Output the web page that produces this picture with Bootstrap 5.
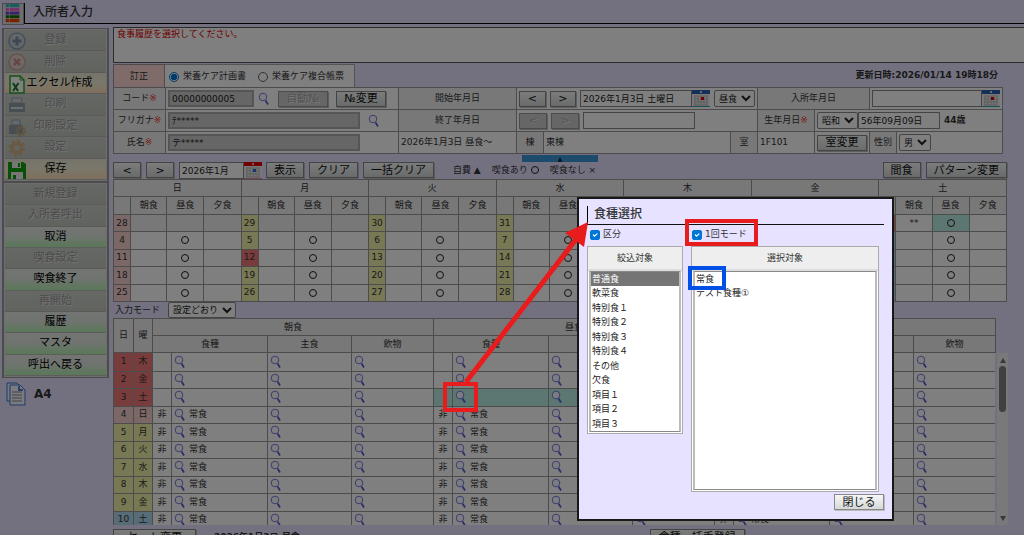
<!DOCTYPE html>
<html lang="ja">
<head>
<meta charset="utf-8">
<meta name="viewport" content="width=device-width, initial-scale=1">
<title>入所者入力</title>
<link href="https://cdn.jsdelivr.net/npm/bootstrap@5.3.0/dist/css/bootstrap.min.css" rel="stylesheet">
<style>
  body { font: 9px/13px "DejaVu Sans", "Noto Sans CJK JP", sans-serif; color: #333; background: #e6e2ff; height: 100vh; overflow: hidden; }
  button, input, select { font-family: inherit; }
  header { padding: 3px 0 0 2px; margin-bottom: 2px; }
  main { min-width: 0; }
  .app-icon { width: 22px; height: 22px; border: 1px solid #999; background: #ddd; }
  .page-title { font-size: 12px; line-height: 18px; height: 21px; border-left: 1px solid #000; border-bottom: 1px solid #000; }
  .side { width: 107px; margin: 1px 4px 0 2px; }
  .side-group { border: 1px solid #999; border-width: 1px 2px; padding: 1px; background: #ddd; }
  .side-a { min-height: 154px; }
  .side-b { min-height: 196px; }
  .side-btn { flex: 1 1 0; font-size: 11px; line-height: 14px; padding: 0; border: 0; border-radius: 0; color: #000; position: relative; border-bottom: 1px solid #bbb; }
  .side-btn:hover { color: #000; }
  .side-btn svg { position: absolute; left: 2px; top: 1px; width: 20px; height: 20px; }
  .side-yellow { background: linear-gradient(#ece8d4, #f4f0d8 45%, #ffdfb8); }
  .side-green { background: linear-gradient(#e6eae6, #dfe8df 50%, #b4f0b0); }
  .side-btn:disabled { background: linear-gradient(#ccd0ca, #c2c6be); color: #999; opacity: 1; text-shadow: 1px 1px 0 #e8e8e8; border-bottom-color: #b4b4b4; }
  .side-btn:disabled svg { opacity: .4; }
  .paper-size { font-size: 12px; }
  .msg { height: 36px; border: 1px solid #555; border-right: 0; background: #fff; color: #e00000; padding: 0 3px; }
  .tab-row { height: 23px; }
  .tab-fix { width: 52px; background: #ffd9d5; border: 1px solid #999; border-bottom: 0; }
  .tab-radio { width: 190px; background: #fff; border: 1px solid #aaa; border-left: 0; border-bottom: 0; }
  .tab-radio .form-check-input { width: 10px; height: 10px; margin: 2px 0 0; }
  input[type=radio]:checked { background-color: #fff; background-image: radial-gradient(circle, #0078d7 0 3px, #fff 3px 4px); border-color: #0078d7; }
  .form-check-input { border-color: #666; }
  .grid { width: 100%; table-layout: fixed; border-collapse: collapse; background: #fff; }
  .grid th, .grid td { border: 1px solid #999; padding: 0; font-weight: 400; vertical-align: middle; overflow: hidden; white-space: nowrap; }
  .grid th { background: #f0f0f0; text-align: center; }
  .person td { padding: 0 2px; }
  .person tr { height: 22px; }
  .req { color: #f03030; }
  .box { font-size: 9px; line-height: 13px; min-height: 0; height: 17px; padding: 0 2px; border: 1px solid #888; border-radius: 0; color: #222; background: #fff; }
  .box:disabled { background: #ccc; color: #222; border: 2px solid #aaa; }
  .w-code { width: 86px; } .w-name { width: 192px; } .w-date { width: 112px; } .w-birth { width: 82px; } .w-month { width: 65px; }
  .pick { font-size: 9px; line-height: 13px; height: 17px; border: 1px solid #888; border-radius: 2px; background: #fff; color: #222; padding: 0; }
  .cmd { font-size: 11px; line-height: 13px; height: 16px; padding: 0 7px; border: 1px solid #888; border-radius: 0; color: #111; background: linear-gradient(#f6f8f8, #d4d8d8); box-shadow: 1px 1px 0 #bbb; white-space: nowrap; }
  .cmd:disabled { background: #ccc; color: #aaa; border-color: #999; opacity: 1; text-shadow: 1px 1px 0 #eee; }
  .cmd-step { width: 28px; padding: 0; }
  .cmd-w { width: 50px; padding: 0; }
  .cal-ico { width: 18px; height: 17px; flex: none; }
  .mag { width: 12px; height: 14px; display: block; }
  .person-wrap { margin-right: 22px; padding-top: 1px; }
  .calendar-wrap { margin-right: 17px; }
  .meal-wrap { margin-right: 29px; }
  .bar { height: 25px; padding-top: 7px; margin-right: 17px; position: relative; }
  .bar .cmd { margin-right: 5px; }
  .legend { gap: 11px; margin-left: 14px; }
  .pull-tab { position: absolute; left: 409px; top: 1px; width: 76px; height: 7px; background: #3a96d8; font-size: 6px; line-height: 8px; color: #123; text-align: center; }
  .month-table { height: 123px; text-align: center; }
  .month-table .gone { background: #f0f0f0; }
  .c-sun { background: #f6d0cc !important; } .c-day { background: #f0f0a8 !important; } .c-sat { background: #b0d8f0 !important; }
  .c-red { background: #f07878 !important; } .c-now { background: #b8ece2 !important; }
  .ring { width: 8px; height: 8px; border: 1px solid #222; border-radius: 50%; display: inline-block; vertical-align: middle; }
  .mode-row { height: 16px; padding-left: 2px; }
  .mode-row .pick { height: 16px; }
  .meal-head { height: 35px; }
  .meal-scroll { height: 172px; overflow: hidden; }
  .meal-table tbody tr:nth-child(odd) { height: 18px; }
  .meal-table tbody tr:nth-child(even) { height: 17px; }
  .meal-table tbody tr:first-child td { border-top: 0; }
  .meal-table td { text-align: center; }
  .meal-table td.pickcell { text-align: left; padding-left: 2px; }
  .pickcell > div { gap: 3px; }
  .scroll-rail { position: absolute; right: 16px; top: 35px; bottom: 0; width: 11px; background: #f2f2f2; }
  .scroll-rail i { width: 7px; height: 46px; border-radius: 4px; background: #808080; margin: 3px auto auto; display: block; }
  .tri-up, .tri-down { width: 0; border: 3px solid transparent; }
  .tri-up { border-top: 0; border-bottom: 5px solid #707070; margin-top: 5px; }
  .tri-down { border-bottom: 0; border-top: 5px solid #707070; margin-bottom: 4px; }
  .foot { padding-top: 4px; }
  .foot .cmd { padding: 0 13px; }
  .foot .cmd:first-child { margin-right: 18px; }
  .foot .cmd:last-child { margin-left: 350px; padding: 0 8px; }
  .shade { background: rgba(0, 0, 0, .5); }
  .dialog { position: absolute; left: 577px; top: 197px; width: 317px; border: 2px solid #181818; background: #e6e2ff; padding: 7px 8px 9px; color: #333; }
  .dialog h2 { font-size: 12px; line-height: 17px; height: 19px; margin: 0; padding-left: 6px; border-left: 1px solid #000; border-bottom: 1px solid #111; }
  .dialog .form-check-input { width: 10px; height: 10px; margin: 0 3px 0 0; border-radius: 2px; }
  .dialog .form-check-input:checked { background-color: #0075d8; border-color: #0075d8; }
  .checks { height: 19px; padding: 0 3px; }
  .panes { gap: 8px; padding-top: 2px; }
  .pane { border: 1px solid #aaa; background: #fff; padding: 0 1px 1px; }
  .pane-l { width: 96px; } .pane-r { width: 188px; }
  .pane-head { height: 24px; background: #eee; border-bottom: 2px solid #ddd; margin: 0 -1px; }
  .list { width: 100%; font-size: 9px; border: 1px solid #888; border-left: 2px solid #bbb; border-right: 2px solid #bbb; border-radius: 0; background: #fff; color: #222; padding: 0; overflow: hidden; display: block; outline: 0; }
  .list option { padding: 0 1px; min-height: 14px; line-height: 14px; }
  .list option:nth-child(even) { min-height: 15px; }
  .list .hot { background: #757575; color: #fff; }
  .list-l { height: 161px; } .list-r { height: 219px; }
  .close-row { padding-top: 2px; }
  .gap-opts { width: 71px; }
</style>
</head>
<body class="d-flex flex-column">
<svg class="d-none">
  <symbol id="mag" viewBox="0 0 12 14"><circle cx="5" cy="5" r="3.800" fill="#fbfbff" stroke="#7878e0" stroke-width="1"/><path d="M7.500 8.500l2.500 4" stroke="#5858d0" stroke-width="1.700" fill="none"/></symbol>
  <symbol id="cal" viewBox="0 0 18 17"><path fill="#eee" d="M0 0h18v17H0z"/><path fill="#2860b0" d="M0 0h18v4H0z"/><path fill="#30a0b0" d="M0 16h18v1H0z"/><circle cx="9" cy="2" r="1" fill="#fff"/><path d="M3 6v9M6 6v9M9 6v9M12 6v9M15 6v9M2 6h14M2 9h14M2 12h14M2 15h14" stroke="#bbb"/><path fill="#e00000" d="M9 7h3v3H9z"/></symbol>
  <symbol id="calr" viewBox="0 0 18 17"><path fill="#eee" d="M0 0h18v17H0z"/><path fill="#e00000" d="M0 0h18v4H0z"/><path fill="#e080b0" d="M0 16h18v1H0z"/><circle cx="9" cy="2" r="1" fill="#fff"/><path d="M3 6v9M6 6v9M9 6v9M12 6v9M15 6v9M2 6h14M2 9h14M2 12h14M2 15h14" stroke="#bbb"/><path fill="#2070d0" d="M9 7h3v3H9z"/></symbol>
</svg>

<header class="d-flex">
  <svg class="app-icon" viewBox="0 0 22 22" aria-hidden="true"><path fill="#30c0c0" d="M3 0h15v4H3z"/><path fill="#f060d0" d="M3 4h15v4H3z"/><path fill="#7040d0" d="M3 8h15v4H3z"/><path fill="#107000" d="M3 12h15v4H3z"/><path fill="#f04000" d="M3 16h15v4H3z"/><path d="M7 0v20M3 4h15M3 8h15M3 12h15M3 16h15" stroke="#eee" stroke-width=".6"/></svg>
  <h1 class="page-title flex-fill mb-0 ps-2">入所者入力</h1>
</header>

<div class="d-flex flex-fill">
  <nav class="side flex-shrink-0">
    <div class="side-group side-a d-flex flex-column">
      <button class="btn side-btn" disabled><svg viewBox="0 0 20 20"><circle cx="10" cy="10" r="8" fill="#ccd6ee" stroke="#3058a0" stroke-width="1.5"/><path d="M10 5.500v9M5.500 10h9" stroke="#103c80" stroke-width="3"/></svg>登録</button>
      <button class="btn side-btn" disabled><svg viewBox="0 0 20 20"><circle cx="10" cy="10" r="8" fill="#fcdcdc" stroke="#e06060" stroke-width="1.500"/><path d="M7 7l6 6M13 7l-6 6" stroke="#d83030" stroke-width="2.500"/></svg>削除</button>
      <button class="btn side-btn side-yellow"><svg viewBox="0 0 20 20"><path d="M3 2h10l4 4v13H3z" fill="#fff" stroke="#30a030" stroke-width="1.500"/><path d="M13 2v4h4" fill="none" stroke="#30a030"/><path d="M6 9l5 8M11.500 9L6 17" stroke="#108020" stroke-width="2"/></svg><span class="ps-2">エクセル作成</span></button>
      <button class="btn side-btn" disabled><svg viewBox="0 0 20 20"><path d="M5 8V3h10v5z" fill="#ddf" stroke="#406080"/><path d="M2 8h16v9H2z" fill="#406080"/><path d="M4 13h12" stroke="#fff" stroke-width="2"/></svg>印刷</button>
      <button class="btn side-btn" disabled><svg viewBox="0 0 20 20"><path d="M5 8V3h8v5z" fill="#ddf" stroke="#406080"/><path d="M2 8h14v9H2z" fill="#406080"/><circle cx="14" cy="14" r="4" fill="none" stroke="#d07818" stroke-width="3" stroke-dasharray="2 1"/></svg>印刷設定</button>
      <button class="btn side-btn" disabled><svg viewBox="0 0 20 20"><circle cx="10" cy="10" r="4.500" fill="none" stroke="#e09030" stroke-width="3.500"/><circle cx="10" cy="10" r="7" fill="none" stroke="#e09030" stroke-width="3" stroke-dasharray="3 2.500"/></svg>設定</button>
      <button class="btn side-btn side-yellow"><svg viewBox="0 0 20 20"><path d="M1 2h15l3 2v15H1z" fill="#10a010"/><path d="M5 2h9v6H5zM4 12h12v7H4z" fill="#eee"/><path d="M11 3h2v4h-2zM6 15h3v4H6z" fill="#10a010"/></svg>保存</button>
    </div>
    <div class="side-group side-b d-flex flex-column">
      <button class="btn side-btn" disabled>新規登録</button>
      <button class="btn side-btn" disabled>入所者呼出</button>
      <button class="btn side-btn side-green">取消</button>
      <button class="btn side-btn" disabled>喫食設定</button>
      <button class="btn side-btn side-green">喫食終了</button>
      <button class="btn side-btn" disabled>再開始</button>
      <button class="btn side-btn side-green">履歴</button>
      <button class="btn side-btn side-green">マスタ</button>
      <button class="btn side-btn side-green">呼出へ戻る</button>
    </div>
    <div class="d-flex align-items-center gap-2 pt-1 ps-1">
      <svg width="20" height="24" viewBox="0 0 20 24" aria-hidden="true"><path d="M1 1h10l3 3v15H1z" fill="#e8f0ff" stroke="#3878d0"/><path d="M4 3h10l5 5v15H4z" fill="#f4f6ff" stroke="#3878d0"/><path d="M13 4v4h4" fill="none" stroke="#2060c0" stroke-width="1.500"/><path d="M6 10h10M6 13h10M6 16h10M6 19h10" stroke="#888"/></svg>
      <b class="paper-size">A4</b>
    </div>
  </nav>

  <main class="flex-fill">
    <div class="msg">食事履歴を選択してください。</div>

    <div class="person-wrap">
      <div class="tab-row d-flex align-items-stretch">
        <div class="tab-fix d-flex align-items-center justify-content-center">訂正</div>
        <div class="tab-radio d-flex align-items-center ps-1 gap-1">
          <input class="form-check-input" type="radio" name="plan" id="p1" checked><label for="p1" class="me-2">栄養ケア計画書</label>
          <input class="form-check-input" type="radio" name="plan" id="p2"><label for="p2">栄養ケア複合帳票</label>
        </div>
        <b class="ms-auto pe-1 align-self-center">更新日時:2026/01/14 19時18分</b>
      </div>
      <table class="grid person">
        <colgroup><col width="52"><col width="233"><col width="118"><col width="27"><col width="187"><col width="27"><col width="57"><col width="55"><col width="27"><col width="106"></colgroup>
        <tr>
          <th><label for="code">コード<span class="req">※</span></label></th>
          <td><div class="d-flex align-items-center gap-1"><input id="code" class="box w-code" value="00000000005" disabled><svg class="mag me-1"><use href="#mag"/></svg><button class="btn cmd cmd-w me-1" disabled>自動№</button><button class="btn cmd cmd-w">№変更</button></div></td>
          <th><label for="from">開始年月日</label></th>
          <td colspan="3"><div class="d-flex align-items-center"><button class="btn cmd cmd-step me-1">&lt;</button><button class="btn cmd cmd-step me-1">&gt;</button><input id="from" class="box w-date" value="2026年1月3日 土曜日"><svg class="cal-ico me-1"><use href="#cal"/></svg><select class="pick" aria-label="食事"><option>昼食</option></select></div></td>
          <th colspan="2"><label for="enter">入所年月日</label></th>
          <td colspan="2"><div class="d-flex"><input id="enter" class="box flex-fill w-25"><svg class="cal-ico"><use href="#cal"/></svg></div></td>
        </tr>
        <tr>
          <th><label for="kana">フリガナ<span class="req">※</span></label></th>
          <td><div class="d-flex align-items-center gap-2"><input id="kana" class="box w-name" value="ﾃ*****" disabled><svg class="mag"><use href="#mag"/></svg></div></td>
          <th><label for="to">終了年月日</label></th>
          <td colspan="3"><div class="d-flex align-items-center gap-1"><button class="btn cmd cmd-step" disabled>&lt;</button><button class="btn cmd cmd-step" disabled>&gt;</button><input id="to" class="box w-date"></div></td>
          <th><label for="birth">生年月日<span class="req">※</span></label></th>
          <td colspan="3"><div class="d-flex align-items-center"><select class="pick" aria-label="元号"><option>昭和</option></select><input id="birth" class="box w-birth me-1" value="56年09月09日"><b>44歳</b></div></td>
        </tr>
        <tr>
          <th><label for="name">氏名<span class="req">※</span></label></th>
          <td><input id="name" class="box w-name d-block" value="テ*****" disabled></td>
          <td>2026年1月3日 昼食～</td>
          <th>棟</th><td>東棟</td><th>室</th><td>1F101</td>
          <td><button class="btn cmd cmd-w d-block">室変更</button></td>
          <th><label for="sex">性別</label></th>
          <td><select id="sex" class="pick d-block"><option>男</option></select></td>
        </tr>
      </table>
    </div>

    <div class="bar d-flex align-items-center">
      <div class="pull-tab">▲</div>
      <button class="btn cmd cmd-step">&lt;</button><button class="btn cmd cmd-step">&gt;</button>
      <input class="box w-month" aria-label="年月" value="2026年1月"><svg class="cal-ico me-1"><use href="#calr"/></svg>
      <button class="btn cmd">表示</button><button class="btn cmd">クリア</button><button class="btn cmd">一括クリア</button>
      <div class="legend d-flex"><span>自費 ▲</span><span>喫食あり <i class="ring"></i></span><span>喫食なし ×</span></div>
      <button class="btn cmd ms-auto">間食</button><button class="btn cmd me-0">パターン変更</button>
    </div>

    <div class="calendar-wrap"><table class="grid month-table" id="month"></table></div>

    <div class="mode-row d-flex align-items-center gap-2"><label for="mode">入力モード</label><select id="mode" class="pick"><option>設定どおり</option></select></div>

    <div class="position-relative">
      <div class="meal-wrap">
        <table class="grid meal-head">
          <colgroup class="mealcols"></colgroup>
          <tr><th rowspan="2">日</th><th rowspan="2">曜</th><th colspan="4">朝食</th><th colspan="4">昼食</th><th colspan="4">夕食</th></tr>
          <tr><th colspan="2">食種</th><th>主食</th><th>飲物</th><th colspan="2">食種</th><th>主食</th><th>飲物</th><th colspan="2">食種</th><th>主食</th><th>飲物</th></tr>
        </table>
        <div class="meal-scroll"><table class="grid meal-table"><colgroup class="mealcols"></colgroup><tbody id="meals"></tbody></table></div>
      </div>
      <div class="scroll-rail d-flex flex-column align-items-center"><span class="tri-up"></span><i></i><span class="tri-down"></span></div>
    </div>

    <div class="foot d-flex align-items-center">
      <button class="btn cmd">セット変更</button><b>2026年1月3日 昼食</b>
      <button class="btn cmd">食種一括手登録</button>
    </div>
  </main>
</div>

<div class="shade position-fixed top-0 start-0 w-100 h-100"></div>

<section class="dialog" role="dialog" aria-labelledby="dt">
  <h2 id="dt">食種選択</h2>
  <div class="checks d-flex align-items-center">
    <input class="form-check-input" type="checkbox" id="k1" checked><label for="k1">区分</label>
    <span class="gap-opts"></span>
    <input class="form-check-input" type="checkbox" id="k2" checked><label for="k2">1回モード</label>
  </div>
  <div class="panes d-flex align-items-start">
    <div class="pane pane-l"><label for="l1" class="pane-head d-flex align-items-center justify-content-center">絞込対象</label>
      <select id="l1" class="list list-l" size="11"><option class="hot">普通食</option><option>軟菜食</option><option>特別食１</option><option>特別食２</option><option>特別食３</option><option>特別食４</option><option>その他</option><option>欠食</option><option>項目１</option><option>項目２</option><option>項目３</option></select></div>
    <div class="pane pane-r"><label for="l2" class="pane-head d-flex align-items-center justify-content-center">選択対象</label>
      <select id="l2" class="list list-r" size="15"><option>常食</option><option>テスト食種①</option></select></div>
  </div>
  <div class="close-row d-flex justify-content-end"><button class="btn cmd cmd-w">閉じる</button></div>
</section>

<svg class="position-absolute top-0 start-0 pe-none" width="1024" height="535" viewBox="0 0 1024 535" aria-hidden="true">
  <g fill="none" stroke="#e81c1c" stroke-width="5"><path d="M466 382L577 238"/><rect x="445" y="384" width="31" height="26" stroke-width="4"/><rect x="687" y="221" width="69" height="23" stroke-width="4"/></g>
  <path d="M588 222L565 233L584 247z" fill="#e81c1c"/>
  <rect x="690" y="268" width="34" height="20" fill="none" stroke="#0050e8" stroke-width="4"/>
</svg>

<script>
  // Month overview: one group of four columns for each weekday
  const week = ['日', '月', '火', '水', '木', '金', '土'];
  const first = [28, 29, 30, 31, 1, 2, 3];
  const tone = i => i === 0 ? 'c-sun' : i === 6 ? 'c-sat' : 'c-day';
  const ring = '<i class="ring"></i>';
  let h = '<colgroup>' + week.map(() => '<col width="17"><col width="36"><col width="37"><col width="37">').join('') + '</colgroup>';
  h += '<tr>' + week.map(w => `<th colspan="4">${w}</th>`).join('') + '</tr>';
  h += '<tr>' + week.map(() => '<th></th><th>朝食</th><th>昼食</th><th>夕食</th>').join('') + '</tr>';
  for (let r = 0; r < 5; r++) {
    h += '<tr>' + week.map((w, i) => {
      const d = r ? i + 4 + (r - 1) * 7 : first[i];
      const gone = (!r && i < 4) || d > 31;
      const red = d === 12 || (!r && i > 3);
      const now = !r && i === 6;
      const g = gone ? 'gone' : '';
      return `<td class="${red ? 'c-red' : tone(i)}">${d > 31 ? '' : d}</td><td class="${g}">${now ? '**' : ''}</td>` +
        `<td class="${now ? 'c-now' : g}">${r || now ? ring : ''}</td><td class="${g}"></td>`;
    }).join('') + '</tr>';
  }
  document.getElementById('month').innerHTML = h;

  // Daily meals
  const cols = [20, 19].concat(...[0, 1, 2].map(() => [19, 96, 84, 82]));
  document.querySelectorAll('.mealcols').forEach(c => c.innerHTML = cols.map(w => `<col width="${w}">`).join(''));
  const mag = '<svg class="mag"><use href="#mag"/></svg>';
  h = '';
  for (let d = 1; d <= 10; d++) {
    const wd = (d + 3) % 7, c = d < 4 ? 'c-red' : tone(wd);
    h += `<tr><td class="${c}">${d}</td><td class="${c}">${week[wd]}</td>`;
    for (let m = 0; m < 3; m++) {
      const n = d === 3 && m === 1 ? ' c-now' : '';
      h += `<td class="${n}">${d > 3 ? '非' : ''}</td><td class="pickcell${n}"><div class="d-flex align-items-center">${mag}${d > 3 ? '常食' : ''}</div></td>` +
        `<td class="pickcell${n}">${mag}</td><td class="pickcell${n}">${mag}</td>`;
    }
    h += '</tr>';
  }
  document.getElementById('meals').innerHTML = h;
</script>
<script src="https://cdn.jsdelivr.net/npm/bootstrap@5.3.0/dist/js/bootstrap.bundle.min.js"></script>
</body>
</html>
